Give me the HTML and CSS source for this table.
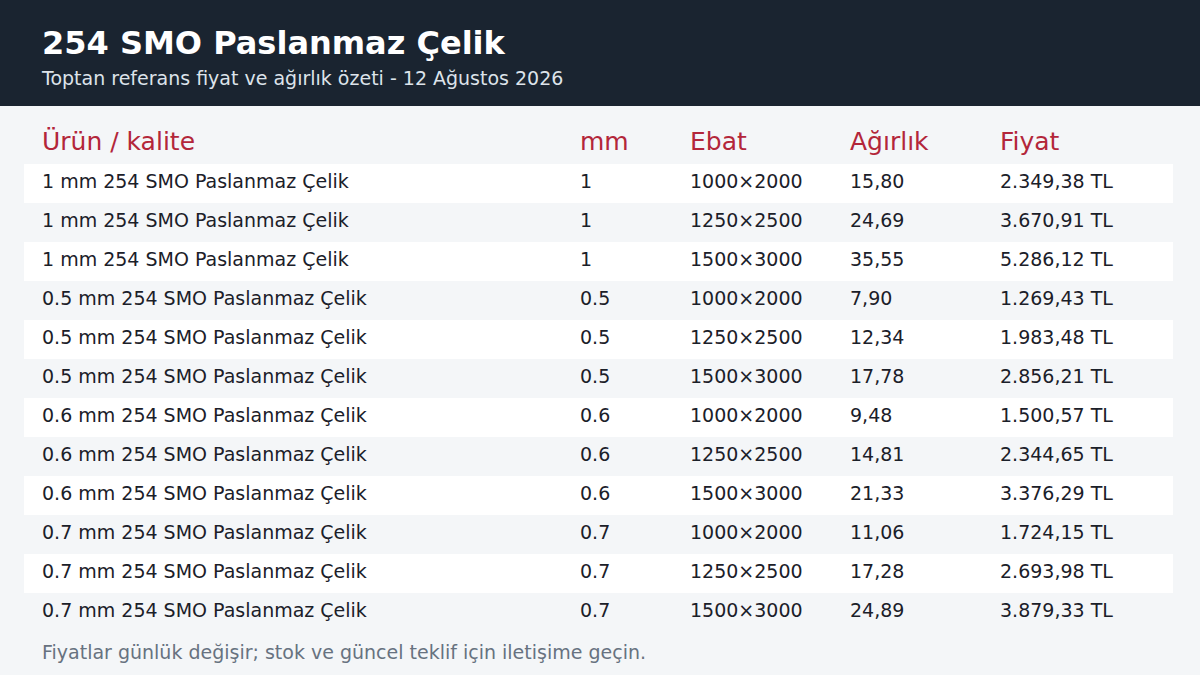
FILE: index.html
```html
<!DOCTYPE html>
<html lang="tr">
<head>
<meta charset="utf-8">
<link rel="stylesheet" href="styles.css">
</head>
<body>
<header class="top">
  <h1 class="title">254 SMO Paslanmaz Çelik</h1>
  <p class="subtitle">Toptan referans fiyat ve ağırlık özeti - 12 Ağustos 2026</p>
</header>
<main class="content">
  <table class="prices">
    <thead>
      <tr><th class="c-name">Ürün / kalite</th><th class="c-mm">mm</th><th class="c-size">Ebat</th><th class="c-w">Ağırlık</th><th class="c-p">Fiyat</th></tr>
    </thead>
    <tbody>
      <tr><td>1 mm 254 SMO Paslanmaz Çelik</td><td>1</td><td>1000×2000</td><td>15,80</td><td>2.349,38 TL</td></tr>
      <tr><td>1 mm 254 SMO Paslanmaz Çelik</td><td>1</td><td>1250×2500</td><td>24,69</td><td>3.670,91 TL</td></tr>
      <tr><td>1 mm 254 SMO Paslanmaz Çelik</td><td>1</td><td>1500×3000</td><td>35,55</td><td>5.286,12 TL</td></tr>
      <tr><td>0.5 mm 254 SMO Paslanmaz Çelik</td><td>0.5</td><td>1000×2000</td><td>7,90</td><td>1.269,43 TL</td></tr>
      <tr><td>0.5 mm 254 SMO Paslanmaz Çelik</td><td>0.5</td><td>1250×2500</td><td>12,34</td><td>1.983,48 TL</td></tr>
      <tr><td>0.5 mm 254 SMO Paslanmaz Çelik</td><td>0.5</td><td>1500×3000</td><td>17,78</td><td>2.856,21 TL</td></tr>
      <tr><td>0.6 mm 254 SMO Paslanmaz Çelik</td><td>0.6</td><td>1000×2000</td><td>9,48</td><td>1.500,57 TL</td></tr>
      <tr><td>0.6 mm 254 SMO Paslanmaz Çelik</td><td>0.6</td><td>1250×2500</td><td>14,81</td><td>2.344,65 TL</td></tr>
      <tr><td>0.6 mm 254 SMO Paslanmaz Çelik</td><td>0.6</td><td>1500×3000</td><td>21,33</td><td>3.376,29 TL</td></tr>
      <tr><td>0.7 mm 254 SMO Paslanmaz Çelik</td><td>0.7</td><td>1000×2000</td><td>11,06</td><td>1.724,15 TL</td></tr>
      <tr><td>0.7 mm 254 SMO Paslanmaz Çelik</td><td>0.7</td><td>1250×2500</td><td>17,28</td><td>2.693,98 TL</td></tr>
      <tr><td>0.7 mm 254 SMO Paslanmaz Çelik</td><td>0.7</td><td>1500×3000</td><td>24,89</td><td>3.879,33 TL</td></tr>
    </tbody>
  </table>
  <p class="note">Fiyatlar günlük değişir; stok ve güncel teklif için iletişime geçin.</p>
</main>
</body>
</html>
```
FILE: styles.css
```css
html, body {
  margin: 0;
  padding: 0;
}
body {
  width: 1200px;
  height: 675px;
  overflow: hidden;
  background: #f4f6f8;
  font-family: "DejaVu Sans", "Liberation Sans", sans-serif;
  color: #1b2029;
}
.top {
  background: #1a2430;
  height: 106px;
  box-sizing: border-box;
  padding: 23px 42px 0;
}
.title {
  margin: 0;
  font-size: 32px;
  line-height: 40px;
  font-weight: bold;
  color: #ffffff;
}
.subtitle {
  margin: 3px 0 0;
  font-size: 19px;
  line-height: 24px;
  color: #dde3ea;
}
.content {
  padding: 12px 27px 0 24px;
}
.prices {
  width: 1149px;
  border-collapse: collapse;
  table-layout: fixed;
}
.prices th {
  text-align: left;
  font-weight: normal;
  font-size: 25px;
  line-height: 44px;
  height: 46px;
  box-sizing: border-box;
  padding: 2px 0 0 18px;
  color: #b3263a;
}
.c-name { width: 538px; }
.c-mm { width: 110px; }
.c-size { width: 160px; }
.c-w { width: 150px; }
.prices td {
  font-size: 19px;
  height: 39px;
  line-height: 35px;
  padding: 0 0 4px 18px;
  box-sizing: border-box;
  white-space: nowrap;
}
.prices tbody tr:nth-child(odd) {
  background: #ffffff;
}
.note {
  margin: 4px 0 0 18px;
  font-size: 19px;
  line-height: 32px;
  color: #677280;
}
```
